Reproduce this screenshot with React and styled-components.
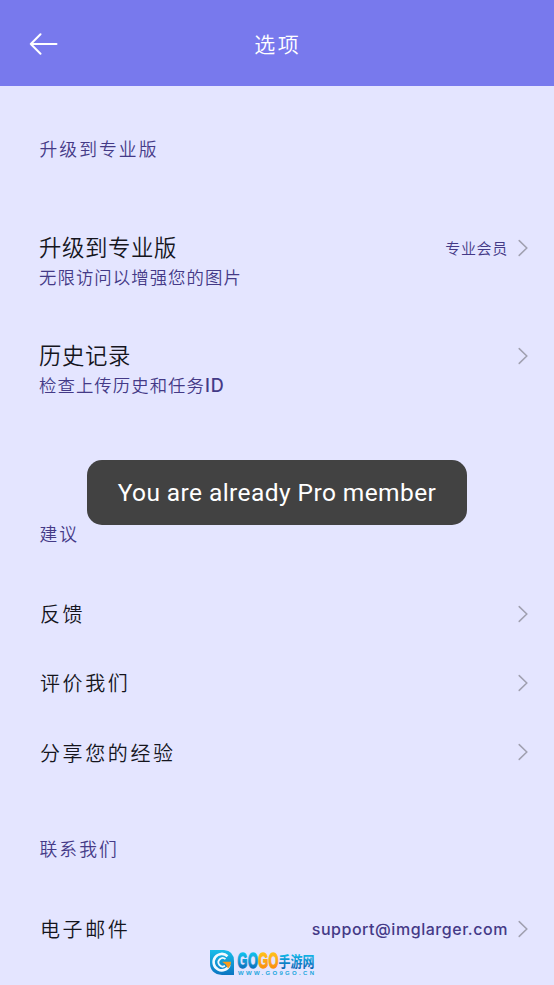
import React from 'react'
import styled, { createGlobalStyle } from 'styled-components'

const GlobalStyle = createGlobalStyle`
* {
box-sizing: border-box;
}
body {
margin: 0;
background-color: #e4e5ff;
font-family: "Noto Sans CJK SC", "Noto Sans", sans-serif;
font-weight: 350;
}
`;
const Container = styled.div`
position: relative;
width: 554px;
height: 985px;
overflow: hidden;
background-color: #e4e5ff;
`;
const Header = styled.header`
display: grid;
grid-template-columns: 58px 1fr 58px;
align-items: center;
height: 86px;
padding-top: 1px;
background-color: #7879ed;
`;
const BackButton = styled.button`
display: flex;
justify-content: flex-end;
padding: 0;
border: none;
background: none;
cursor: pointer;
`;
const Title = styled.h1`
margin: 0;
padding-bottom: 2px;
font-size: 21px;
font-weight: 350;
line-height: 30px;
letter-spacing: 2.5px;
text-indent: 1.5px;
text-align: center;
color: white;
`;
const Section = styled.section`
padding: ${props => props.$top}px 26px 0 39px;
`;
const SectionTitle = styled.h2`
margin: 0 0 ${props => props.$gap}px;
padding-left: 0.5px;
font-size: 17.8px;
font-weight: 350;
line-height: 26px;
letter-spacing: 2.05px;
color: #443a87;
`;
const Card = styled.div`
display: grid;
grid-template-columns: 1fr auto;
align-items: center;
margin-bottom: 48px;
`;
const CardTitle = styled.div`
padding-bottom: 4px;
font-size: 22.4px;
line-height: 26px;
letter-spacing: 0.6px;
color: #15151d;
`;
const CardText = styled.p`
grid-column: 1 / -1;
margin: 0;
padding-bottom: 2px;
font-size: 17.4px;
line-height: 28px;
letter-spacing: 1.05px;
color: #443a87;
`;
const Latin = styled.span`
font-family: Inter, sans-serif;
font-size: 18px;
font-weight: 500;
letter-spacing: 1px;
`;
const Row = styled.div`
display: flex;
align-items: center;
justify-content: space-between;
height: 69.3px;
`;
const RowLabel = styled.span`
padding-left: 1px;
font-size: 20px;
letter-spacing: 2.6px;
color: #15151d;
`;
const Trailing = styled.span`
display: flex;
align-items: center;
gap: 10px;
`;
const Status = styled.span`
padding-bottom: 2px;
font-size: 15px;
letter-spacing: 0.7px;
color: #443a87;
`;
const Email = styled.span`
font-family: Inter, sans-serif;
font-size: 16px;
font-weight: 500;
letter-spacing: 0.54px;
color: #443a87;
`;
const Toast = styled.div`
position: absolute;
top: 460px;
left: 87px;
display: flex;
align-items: center;
justify-content: center;
width: 380px;
height: 65px;
border-radius: 15px;
background-color: #424242;
color: white;
font-family: Roboto, sans-serif;
font-size: 24.5px;
font-weight: 400;
letter-spacing: 0.42px;
white-space: nowrap;
`;
const Watermark = styled.div`
position: absolute;
left: 209px;
top: 946px;
display: flex;
align-items: flex-end;
gap: 2px;
`;
const Brand = styled.div`
display: flex;
flex-direction: column;
`;

const Chevron = () => (
    <svg width="10" height="18" viewBox="0 0 10 18" fill="none" stroke="#a0a0b0" strokeWidth="1.5" strokeLinecap="round">
        <path d="M1.2 1.6 L8.8 9 L1.2 16.4" />
    </svg>
)

const Logo = () => (
    <Watermark>
        <svg width="26" height="27" viewBox="0 0 26 27">
            <defs>
                <linearGradient id="drop" x1="0" y1="0" x2="0" y2="1">
                    <stop offset="0" stopColor="#18bde9" />
                    <stop offset="1" stopColor="#0b75c2" />
                </linearGradient>
            </defs>
            <path d="M1 1 H15 Q25 2 25 12 V26 H13 Q1 25 1 14 Z" fill="url(#drop)" />
            <path d="M18.5 7.2 A8.2 8.2 0 1 0 20.5 16" fill="none" stroke="#f2faff" strokeWidth="2.6" />
            <path d="M16.5 10.2 A4.2 4.2 0 1 0 16 16.8" fill="none" stroke="#f2faff" strokeWidth="1.8" />
            <path d="M13 12.8 H22 Q22 17 19 19.5 L16.8 15.4 Z" fill="#f99b1c" />
        </svg>
        <Brand>
            <svg width="79" height="23" viewBox="0 -3 79 23">
                <defs>
                    <linearGradient id="blue" x1="0" y1="0" x2="0" y2="1">
                        <stop offset="0.15" stopColor="#12c3ee" />
                        <stop offset="0.85" stopColor="#0b68b8" />
                    </linearGradient>
                    <linearGradient id="orange" x1="0" y1="0" x2="0" y2="1">
                        <stop offset="0.15" stopColor="#ffc21a" />
                        <stop offset="0.85" stopColor="#f98a0c" />
                    </linearGradient>
                </defs>
                <g fontFamily="Liberation Sans, sans-serif" fontWeight="700" fontSize="22" strokeWidth="1.3">
                    <text transform="translate(0.6 19.4) scale(0.58 1)" letterSpacing="0.8" fill="url(#blue)" stroke="url(#blue)">GO</text>
                    <text transform="translate(21.2 19.4) scale(0.58 1)" letterSpacing="0.8" fill="url(#orange)" stroke="url(#orange)">GO</text>
                </g>
                <text x="41.5" y="17.5" fontFamily="Noto Sans CJK SC, sans-serif" fontWeight="700" fontSize="15" textLength="36" lengthAdjust="spacingAndGlyphs" fill="url(#blue)">手游网</text>
            </svg>
            <svg width="79" height="7" viewBox="0 0 79 7">
                <text x="1" y="5.6" fontFamily="Liberation Sans, sans-serif" fontWeight="700" fontSize="6" textLength="76" fill="#21a5dd">WWW.GO9GO.CN</text>
            </svg>
        </Brand>
    </Watermark>
)

const App = () => {
    return (
        <>
            <GlobalStyle />
            <Container>
                <Header>
                    <BackButton aria-label="返回">
                        <svg width="29" height="22" viewBox="0 0 29 22" fill="none" stroke="white" strokeWidth="2" strokeLinecap="round" strokeLinejoin="round">
                            <path d="M27.5 11 H1.8 M11.5 1.2 L1.8 11 L11.5 20.8" />
                        </svg>
                    </BackButton>
                    <Title>选项</Title>
                </Header>
                <Section $top={49}>
                    <SectionTitle $gap={72}>升级到专业版</SectionTitle>
                    <Card>
                        <CardTitle>升级到专业版</CardTitle>
                        <Trailing>
                            <Status>专业会员</Status>
                            <Chevron />
                        </Trailing>
                        <CardText>无限访问以增强您的图片</CardText>
                    </Card>
                    <Card>
                        <CardTitle>历史记录</CardTitle>
                        <Chevron />
                        <CardText>检查上传历史和任务<Latin>ID</Latin></CardText>
                    </Card>
                </Section>
                <Section $top={70}>
                    <SectionTitle $gap={33}>建议</SectionTitle>
                    <Row>
                        <RowLabel>反馈</RowLabel>
                        <Chevron />
                    </Row>
                    <Row>
                        <RowLabel>评价我们</RowLabel>
                        <Chevron />
                    </Row>
                    <Row>
                        <RowLabel>分享您的经验</RowLabel>
                        <Chevron />
                    </Row>
                </Section>
                <Section $top={48}>
                    <SectionTitle $gap={33}>联系我们</SectionTitle>
                    <Row>
                        <RowLabel>电子邮件</RowLabel>
                        <Trailing>
                            <Email>support@imglarger.com</Email>
                            <Chevron />
                        </Trailing>
                    </Row>
                </Section>
                <Toast>You are already Pro member</Toast>
                <Logo />
            </Container>
        </>
    )
}

export default App
